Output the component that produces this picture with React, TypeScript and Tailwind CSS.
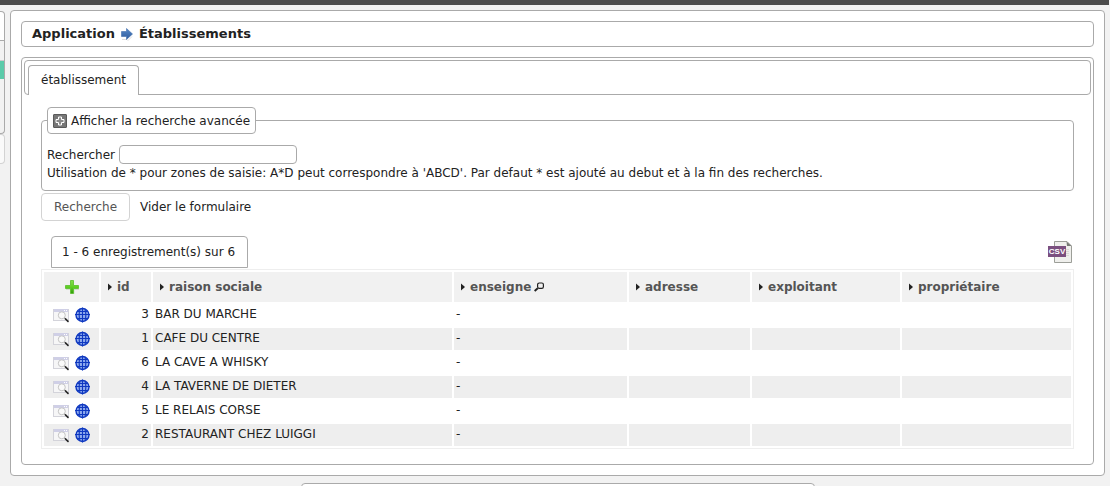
import React from "react";

type Row = { id: number; name: string };

const rows: Row[] = [
  { id: 3, name: "BAR DU MARCHE" },
  { id: 1, name: "CAFE DU CENTRE" },
  { id: 6, name: "LA CAVE A WHISKY" },
  { id: 4, name: "LA TAVERNE DE DIETER" },
  { id: 5, name: "LE RELAIS CORSE" },
  { id: 2, name: "RESTAURANT CHEZ LUIGGI" },
];

const columns = ["id", "raison sociale", "enseigne", "adresse", "exploitant", "propriétaire"];

function ArrowIcon() {
  return (
    <svg width="12" height="14" viewBox="0 0 12 14" aria-hidden="true">
      <defs>
        <linearGradient id="arrow" x1="0" y1="0" x2="0" y2="1">
          <stop offset="0" stopColor="#5588c8" />
          <stop offset="1" stopColor="#2f5b9c" />
        </linearGradient>
      </defs>
      <path d="M1 12.5h5l1 1 4-4" stroke="#dedede" fill="none" />
      <path d="M0.5 4.5H5.5V1.5L11.5 7L5.5 12.5V9.5H0.5Z" fill="url(#arrow)" stroke="#3f6dab" strokeWidth="0.6" />
    </svg>
  );
}

function ExpandIcon() {
  return (
    <svg width="14" height="14" viewBox="0 0 14 14" aria-hidden="true">
      <rect x="0.5" y="0.5" width="13" height="13" rx="0.5" fill="#777" stroke="#5a5a5a" />
      <path d="M5.5 3h3v2.500h2.500v3h-2.500v2.500h-3v-2.500h-2.500v-3h2.500z" fill="#8a8a8a" stroke="#fff" />
    </svg>
  );
}

function AddIcon() {
  return (
    <svg width="16" height="16" viewBox="0 0 16 16" aria-hidden="true">
      <defs>
        <linearGradient id="add" x1="0" y1="0" x2="0" y2="1">
          <stop offset="0" stopColor="#86dd4c" />
          <stop offset="0.5" stopColor="#5fd022" />
          <stop offset="1" stopColor="#2f9a0a" />
        </linearGradient>
      </defs>
      <path d="M2 10.5h4.5M10 15v-4.5h5" stroke="#d2dccd" fill="none" />
      <path d="M6.5 1.5h3v5h5v3h-5v5h-3v-5h-5v-3h5z" fill="url(#add)" stroke="#58bd2a" strokeWidth="0.8" />
    </svg>
  );
}

function PreviewIcon() {
  return (
    <svg width="17" height="15" viewBox="0 0 17 15" aria-hidden="true">
      <rect x="0.5" y="1.5" width="15" height="11" fill="#f6f6f7" stroke="#d3d3da" />
      <rect x="1" y="1" width="14" height="3" fill="#cfcfe6" />
      <path d="M11 2.5h1M13 2.5h1" stroke="#fff" />
      <circle cx="8.8" cy="7.3" r="3.5" fill="#fafafa" stroke="#c4c4c4" />
      <path d="M11.5 10l1.4 1.3" stroke="#888" strokeWidth="1.2" />
      <path d="M12.6 11l2.4 2.4" stroke="#262626" strokeWidth="1.7" strokeLinecap="round" />
    </svg>
  );
}

function GlobeIcon() {
  return (
    <svg width="16" height="16" viewBox="0 0 16 16" aria-hidden="true">
      <circle cx="7.5" cy="8" r="6.5" fill="#8fabee" stroke="#0f38c0" strokeWidth="1.4" />
      <path
        d="M7.5 0.5V15.5M0 7.5H15M2 4.5H13M2 11.5H13M5 2.5C3.9 5 3.9 11 5 13.5M10 2.5C11.100 5 11.100 11 10 13.5"
        stroke="#0f38c0"
        strokeWidth="1.100"
        fill="none"
      />
    </svg>
  );
}

function SortIcon() {
  return (
    <svg width="4" height="8" viewBox="0 0 4 8" aria-hidden="true">
      <path d="M0 0.5L4 4L0 7.5Z" fill="#222" />
    </svg>
  );
}

function LensIcon() {
  return (
    <svg width="10" height="10" viewBox="0 0 10 10" aria-hidden="true">
      <rect x="3.6" y="1" width="5.8" height="5.4" rx="1.6" fill="none" stroke="#222" strokeWidth="1.2" />
      <path d="M3.8 6.3L0.6 9" stroke="#222" strokeWidth="2" />
    </svg>
  );
}

function CsvIcon() {
  return (
    <svg width="24" height="22" viewBox="0 0 24 22" aria-hidden="true">
      <path d="M6.5 0.5H19L23.5 5V21.5H6.5Z" fill="#efefec" stroke="#9c9e98" />
      <path d="M18.5 0.5L19 5H23.5Z" fill="#777a75" />
      <path d="M18 8.5h3M18 10.5h3M18 12.5h3M18 14.5h3" stroke="#d8d8d5" />
      <rect x="0" y="5" width="18" height="11" fill="#7b4f7f" />
      <text x="9" y="13" textAnchor="middle" fontFamily="'Liberation Sans', sans-serif" fontWeight="bold" fontSize="8" fill="#fff">
        CSV
      </text>
    </svg>
  );
}

export default function App() {
  return (
    <div className="min-h-screen overflow-hidden bg-white pr-[5px] font-['DejaVu_Sans',sans-serif] text-xs text-[#222]">
      <div className="min-h-screen bg-[#f2f2f2]">
        <header className="mr-px h-[5px] bg-[#4c4c4c]" />

        <div className="flex items-start gap-[5px] pr-[5px] pt-[5px]">
          <nav aria-label="Menu" className="w-[5px] shrink-0 pt-px">
            <div className="h-[30px] rounded-tr border-b border-r border-t border-[#aaa] bg-white" />
            <div className="h-[93px] rounded-br border-b border-r border-[#aaa] pt-[19px]">
              <div className="h-[19px] border-t border-[#ccc] bg-[#5bcbaa]" />
            </div>
            <div className="h-[30px] rounded-r border-y border-r border-[#d3d3d3] bg-[#fafafa]" />
          </nav>

          <main className="min-w-0 grow rounded border border-[#aaa] bg-white p-[10px]">
            <h1 className="flex h-[26px] items-center gap-[6px] rounded border border-[#aaa] px-[10px] text-[13px] font-bold">
              <span>Application</span>
              <ArrowIcon />
              <span>Établissements</span>
            </h1>

            <section className="mt-[10px] rounded border border-[#aaa] p-[2px]">
              <div className="flex h-[35px] items-end rounded border border-[#aaa] pl-[3px]">
                <a
                  href="#etablissement"
                  className="-mb-px flex h-[30px] items-center rounded-t border-x border-t border-[#aaa] bg-white px-3 pb-[2px]"
                >
                  établissement
                </a>
              </div>

              <div className="px-[17px] pb-[13px] pt-3">
                <form>
                  <fieldset className="rounded border border-[#aaa] px-[5px] pb-2">
                    <legend className="rounded border border-[#aaa]">
                      <button type="button" className="flex h-[25px] items-center gap-1 px-[5px]">
                        <ExpandIcon />
                        Afficher la recherche avancée
                      </button>
                    </legend>
                    <div className="flex items-center gap-1 pt-[11px]">
                      <label htmlFor="recherche">Rechercher</label>
                      <input
                        id="recherche"
                        type="text"
                        className="h-[19px] w-[178px] rounded border border-[#aaa] bg-white px-1 outline-none"
                      />
                    </div>
                    <p className="leading-[18px]">
                      Utilisation de * pour zones de saisie: A*D peut correspondre à 'ABCD'. Par defaut * est ajouté au
                      debut et à la fin des recherches.
                    </p>
                  </fieldset>
                  <div className="mt-[2px] flex items-center gap-[10px]">
                    <button type="submit" className="h-7 rounded border border-[#d3d3d3] px-3 text-[#555]">
                      Recherche
                    </button>
                    <a href="#vider">Vider le formulaire</a>
                  </div>
                </form>

                <div className="mt-[15px] flex items-end justify-between pl-[10px]">
                  <div className="flex h-8 items-center rounded-t border border-[#aaa] pl-[10px] pr-3">
                    1 - 6 enregistrement(s) sur 6
                  </div>
                  <a href="#csv" aria-label="Export CSV" className="mb-[5px] mr-[2px]">
                    <CsvIcon />
                  </a>
                </div>

                <table className="mt-px w-full table-fixed border-separate border-spacing-[2px] border border-[#eee]">
                  <colgroup>
                    <col className="w-[55px]" />
                    <col className="w-[50px]" />
                    <col className="w-[299px]" />
                    <col className="w-[173px]" />
                    <col className="w-[121px]" />
                    <col className="w-[148px]" />
                    <col />
                  </colgroup>
                  <thead>
                    <tr className="h-[30px] text-left text-[#555]">
                      <th className="bg-[#f1f1f1] p-0">
                        <a href="#ajouter" aria-label="Ajouter" className="flex justify-center">
                          <AddIcon />
                        </a>
                      </th>
                      {columns.map((c) => (
                        <th key={c} className="bg-[#f1f1f1] py-0 pl-[7px] pr-0 font-bold">
                          <span className="flex items-center">
                            <a href="#tri" className="flex items-center gap-[5px]">
                              <SortIcon />
                              {c}
                            </a>
                            {c === "enseigne" && (
                              <button type="button" aria-label="Filtrer" className="ml-[3px]">
                                <LensIcon />
                              </button>
                            )}
                          </span>
                        </th>
                      ))}
                    </tr>
                  </thead>
                  <tbody>
                    {rows.map((r) => (
                      <tr key={r.id} className="h-[22px] leading-4 [&:nth-child(even)>td]:bg-[#eee]">
                        <td className="px-[9px] py-0">
                          <span className="flex items-center gap-[5px]">
                            <a href="#consulter" aria-label="Consulter">
                              <PreviewIcon />
                            </a>
                            <a href="#localiser" aria-label="Localiser">
                              <GlobeIcon />
                            </a>
                          </span>
                        </td>
                        <td className="px-[2px] pb-[2px] pt-0 text-right">{r.id}</td>
                        <td className="px-[2px] pb-[2px] pt-0">{r.name}</td>
                        <td className="px-[2px] pb-[2px] pt-0">-</td>
                        <td className="p-0" />
                        <td className="p-0" />
                        <td className="p-0" />
                      </tr>
                    ))}
                  </tbody>
                </table>
              </div>
            </section>
          </main>
        </div>

        <footer className="mt-[7px] pl-[6px]">
          <div className="mx-auto -mb-10 h-10 w-[514px] rounded-t border border-[#aaa] bg-white" />
        </footer>
      </div>
    </div>
  );
}
